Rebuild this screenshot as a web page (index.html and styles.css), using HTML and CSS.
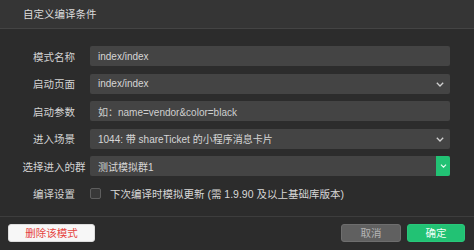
FILE: index.html
```html
<!DOCTYPE html>
<html>
<head>
<meta charset="utf-8">
<link rel="stylesheet" href="styles.css">
</head>
<body>
<div class="dialog">
  <div class="header">自定义编译条件</div>
  <div class="form">
    <div class="row">
      <div class="label">模式名称</div>
      <div class="field"><span class="val">index/index</span></div>
    </div>
    <div class="row">
      <div class="label">启动页面</div>
      <div class="field select"><span class="val">index/index</span>
        <svg class="chev" width="8" height="5" viewBox="0 0 8 5"><polyline points="0.8,0.8 4,4 7.2,0.8" fill="none" stroke="#d0d0d0" stroke-width="1.3"/></svg>
      </div>
    </div>
    <div class="row">
      <div class="label">启动参数</div>
      <div class="field"><span class="val ph">如：name=vendor&amp;color=black</span></div>
    </div>
    <div class="row">
      <div class="label">进入场景</div>
      <div class="field select"><span class="val">1044: 带 shareTicket 的小程序消息卡片</span>
        <svg class="chev" width="8" height="5" viewBox="0 0 8 5"><polyline points="0.8,0.8 4,4 7.2,0.8" fill="none" stroke="#d0d0d0" stroke-width="1.3"/></svg>
      </div>
    </div>
    <div class="row">
      <div class="label">选择进入的群</div>
      <div class="field select green"><span class="val sm">测试模拟群1</span>
        <span class="gbtn"><svg width="7" height="4" viewBox="0 0 8 5"><polyline points="0.8,0.8 4,4 7.2,0.8" fill="none" stroke="#e8fff2" stroke-width="1.4"/></svg></span>
      </div>
    </div>
    <div class="row">
      <div class="label">编译设置</div>
      <div class="check-wrap"><span class="checkbox"></span><span class="ctext">下次编译时模拟更新 (需 1.9.90 及以上基础库版本)</span></div>
    </div>
  </div>
  <div class="footer">
    <button class="btn del">删除该模式</button>
    <div class="right">
      <button class="btn cancel">取消</button>
      <button class="btn ok">确定</button>
    </div>
  </div>
</div>
</body>
</html>
```
FILE: styles.css
```css
html, body {
  margin: 0;
  padding: 0;
  background: #2c2c2c;
}
body {
  width: 474px;
  height: 250px;
  overflow: hidden;
  font-family: "Liberation Sans", "Noto Sans CJK SC", sans-serif;
  font-size: 10.5px;
  color: #d8d8d8;
}
.dialog {
  display: flex;
  flex-direction: column;
  height: 250px;
}
.header {
  height: 29px;
  line-height: 29px;
  padding-left: 23px;
  background: #353535;
  border-bottom: 1px solid #444;
  box-sizing: border-box;
  color: #dcdcdc;
}
.form {
  padding: 17px 24px 0 18px;
  display: flex;
  flex-direction: column;
  gap: 7.5px;
  height: 187px;
  box-sizing: border-box;
}
.row {
  display: flex;
  align-items: center;
  height: 20px;
}
.label {
  flex: 0 0 72px;
  text-align: center;
  color: #d4d4d4;
}
.field {
  width: 360px;
  height: 20px;
  background: #444;
  border-radius: 2px;
  display: flex;
  align-items: center;
  padding-left: 8px;
  box-sizing: border-box;
  position: relative;
}
.val {
  color: #d6d6d6;
  white-space: nowrap;
  font-size: 10px;
}
.val.ph { color: #cfcfcf; }
.chev {
  position: absolute;
  right: 6px;
  top: 8px;
}
.gbtn {
  position: absolute;
  right: 0;
  top: 0;
  width: 14px;
  height: 20px;
  background: #22c274;
  border-radius: 0 2px 2px 0;
  display: flex;
  align-items: center;
  justify-content: center;
}
.check-wrap {
  display: flex;
  align-items: center;
  gap: 9px;
}
.checkbox {
  width: 11px;
  height: 11px;
  box-sizing: border-box;
  border: 1px solid #5e5e5e;
  background: #383838;
  border-radius: 2px;
}
.ctext {
  color: #d8d8d8;
  white-space: nowrap;
}
.footer {
  border-top: 1px solid #3d3d3d;
  flex: 1;
  display: flex;
  justify-content: space-between;
  align-items: flex-start;
  padding: 7px 9px 0 8px;
}
.right {
  display: flex;
  gap: 6px;
}
.btn {
  font-family: "Liberation Sans", "Noto Sans CJK SC", sans-serif;
  font-size: 10.5px;
  height: 18px;
  border-radius: 3px;
  padding: 0;
  line-height: 16px;
  box-sizing: border-box;
}
.del {
  width: 87px;
  background: #f7f7f7;
  border: 1px solid #ddd;
  color: #e64340;
}
.cancel {
  width: 60px;
  background: #606060;
  border: 1px solid #6e6e6e;
  color: #b4b4b4;
}
.ok {
  width: 58px;
  background: #22c274;
  border: 1px solid #28c87a;
  color: #f0fff6;
}
```
